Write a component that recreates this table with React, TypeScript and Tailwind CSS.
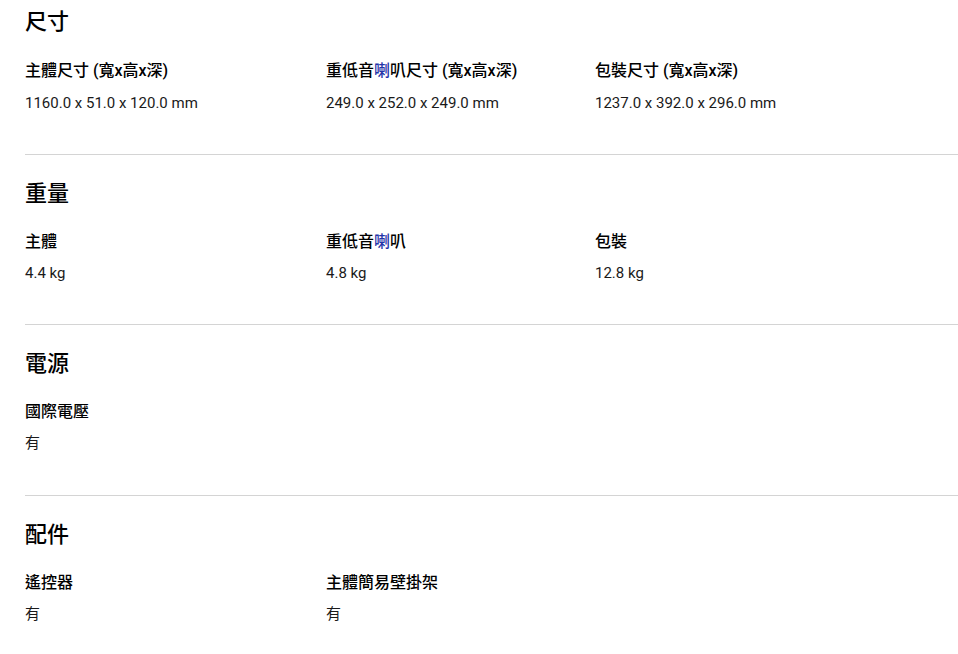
import React from "react";

type Item = { label: React.ReactNode; value: string };
type Section = { title: string; items: Item[] };

const Blue = ({ children }: { children: React.ReactNode }) => (
  <span className="text-[#2433a8]">{children}</span>
);

const sections: Section[] = [
  {
    title: "尺寸",
    items: [
      { label: "主體尺寸 (寬x高x深)", value: "1160.0 x 51.0 x 120.0 mm" },
      {
        label: (
          <>
            重低音<Blue>喇</Blue>叭尺寸 (寬x高x深)
          </>
        ),
        value: "249.0 x 252.0 x 249.0 mm",
      },
      { label: "包裝尺寸 (寬x高x深)", value: "1237.0 x 392.0 x 296.0 mm" },
    ],
  },
  {
    title: "重量",
    items: [
      { label: "主體", value: "4.4 kg" },
      {
        label: (
          <>
            重低音<Blue>喇</Blue>叭
          </>
        ),
        value: "4.8 kg",
      },
      { label: "包裝", value: "12.8 kg" },
    ],
  },
  {
    title: "電源",
    items: [{ label: "國際電壓", value: "有" }],
  },
  {
    title: "配件",
    items: [
      { label: "遙控器", value: "有" },
      { label: "主體簡易壁掛架", value: "有" },
    ],
  },
];

export default function App() {
  return (
    <div
      className="w-[958px] h-[654px] overflow-hidden bg-white pl-[25px] text-[#000]"
      style={{ fontFamily: 'Roboto, "Noto Sans CJK TC", sans-serif' }}
    >
      {sections.map((s, i) => (
        <section
          key={s.title}
          className={
            i === 0
              ? "pt-[1px] pb-[39px]"
              : i === 2
              ? "border-t border-[#d4d4d4] pt-[18px] pb-[40px]"
              : "border-t border-[#d4d4d4] pt-[18px] pb-[39px]"
          }
        >
          <h2 className="text-[22px] leading-[42px] font-medium">{s.title}</h2>
          <div
            className={
              i === 0
                ? "mt-[16px] grid grid-cols-[301px_269px_1fr]"
                : "mt-[15px] grid grid-cols-[301px_269px_1fr]"
            }
          >
            {s.items.map((it, j) => (
              <div
                key={j}
                className={
                  i === 0 ? "flex flex-col gap-[8px]" : "flex flex-col gap-[7px]"
                }
              >
                <div className="text-[16px] leading-[24px] font-medium">
                  {it.label}
                </div>
                <div className="text-[15px] leading-[24px] text-[#1a1a1a]">
                  {it.value}
                </div>
              </div>
            ))}
          </div>
        </section>
      ))}
    </div>
  );
}
